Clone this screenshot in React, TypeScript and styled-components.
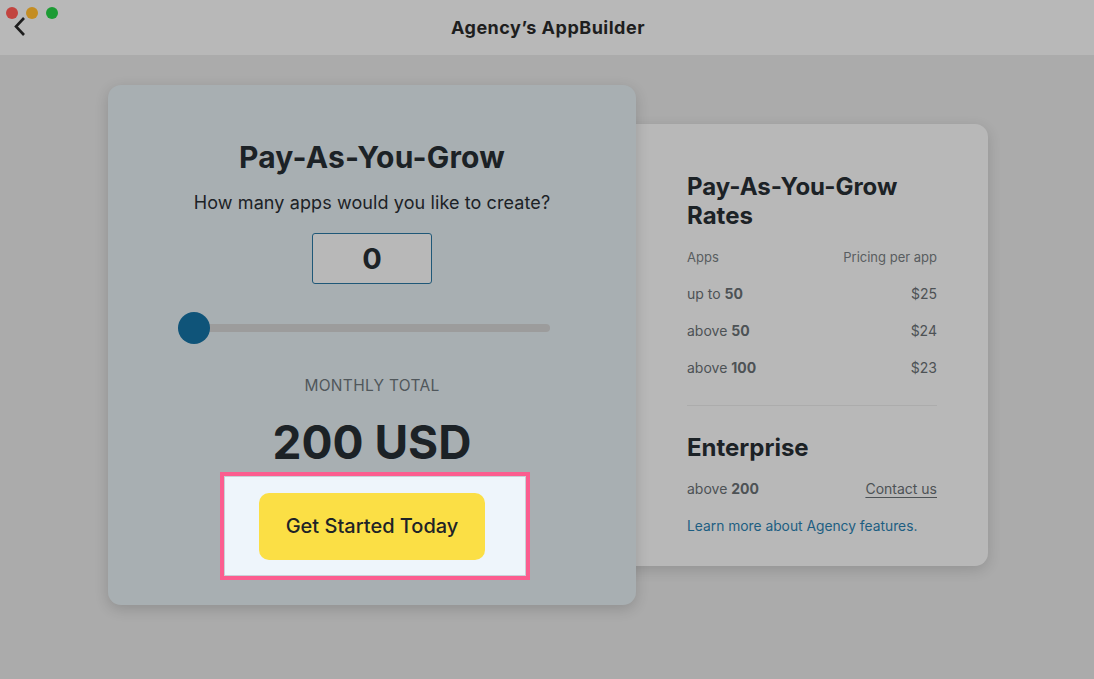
import React from "react";
import styled, { createGlobalStyle } from "styled-components";

const GlobalStyle = createGlobalStyle`
  html, body { margin: 0; padding: 0; }
  body {
    background: #ababab;
    font-family: Inter, "Noto Sans", "Liberation Sans", sans-serif;
    color: #1c2226;
  }
`;

const Window = styled.div`
  min-height: 679px;
  display: flex;
  flex-direction: column;
  background: #ababab;
`;

const TitleBar = styled.header`
  position: relative;
  height: 55px;
  flex: none;
  background: #b8b8b8;
  display: flex;
  align-items: center;
  justify-content: center;
`;

const AppTitle = styled.h1`
  margin: 0 0 0 2px;
  font-size: 18px;
  font-weight: 700;
  color: #1e1e1e;
  letter-spacing: 0.5px;
`;

const Lights = styled.div`
  position: absolute;
  top: 7px;
  left: 6px;
  display: flex;
  gap: 8px;
`;

const Light = styled.span<{ $c: string }>`
  width: 12px;
  height: 12px;
  border-radius: 50%;
  background: ${(p) => p.$c};
`;

const BackButton = styled.div`
  position: absolute;
  left: 12px;
  top: 16px;
  width: 16px;
  height: 22px;
  display: flex;
`;

const Stage = styled.main`
  display: flex;
  align-items: flex-start;
  padding: 30px 0 0 108px;
`;

const PrimaryCard = styled.section`
  position: relative;
  z-index: 2;
  box-sizing: border-box;
  width: 528px;
  height: 520px;
  padding-top: 55px;
  background: #a8afb2;
  border-radius: 13px;
  box-shadow: 0 4px 14px rgba(0, 0, 0, 0.16);
  display: flex;
  flex-direction: column;
  align-items: center;
`;

const PlanTitle = styled.h2`
  margin: 0;
  font-size: 30px;
  line-height: 34px;
  font-weight: 700;
  letter-spacing: 0.2px;
  color: #1c2226;
`;

const Question = styled.p`
  margin: 18px 0 0;
  font-size: 18px;
  line-height: 22px;
  font-weight: 400;
  letter-spacing: 0.1px;
  color: #1c2226;
`;

const CountBox = styled.div`
  box-sizing: border-box;
  margin-top: 19px;
  width: 120px;
  height: 51px;
  border: 1.5px solid #1f5878;
  border-radius: 3px;
  background: #b8b8b8;
  display: flex;
  align-items: center;
  justify-content: center;
  font-size: 29px;
  font-weight: 700;
  color: #1c2226;
`;

const Slider = styled.div`
  position: relative;
  align-self: flex-start;
  margin: 28px 0 0 70px;
  width: 372px;
  height: 32px;
  display: flex;
  align-items: center;
`;

const Track = styled.div`
  width: 100%;
  height: 8px;
  border-radius: 4px;
  background: #9c9c9c;
`;

const Thumb = styled.div`
  position: absolute;
  left: 0;
  top: 0;
  width: 32px;
  height: 32px;
  border-radius: 50%;
  background: #0f5479;
`;

const TotalLabel = styled.div`
  margin-top: 32px;
  font-size: 15.5px;
  line-height: 20px;
  letter-spacing: 0.3px;
  color: #50575b;
`;

const TotalValue = styled.div`
  margin-top: 20px;
  font-size: 46px;
  line-height: 52px;
  font-weight: 700;
  color: #1c2226;
`;

const Spotlight = styled.div`
  box-sizing: border-box;
  margin: 4px 0 0 6px;
  width: 310px;
  height: 108px;
  border: 4px solid #fb5d8f;
  box-shadow: inset 0 0 0 1px #c9d0d6;
  background: #eef5fb;
  display: flex;
  align-items: center;
  justify-content: center;
`;

const CtaButton = styled.button`
  width: 226px;
  height: 67px;
  margin-left: -6px;
  border: none;
  border-radius: 10px;
  background: #fbdf45;
  font-family: inherit;
  font-size: 20px;
  font-weight: 500;
  color: #1e2327;
  cursor: pointer;
`;

const RatesCard = styled.aside`
  box-sizing: border-box;
  margin: 39px 0 0 -30px;
  width: 382px;
  height: 442px;
  padding: 48px 51px 0 81px;
  background: #b8b8b8;
  border-radius: 13px;
  box-shadow: 0 4px 14px rgba(0, 0, 0, 0.14);
  display: flex;
  flex-direction: column;
`;

const RatesTitle = styled.h3<{ $top?: number }>`
  margin: ${(p) => p.$top ?? 0}px 0 0;
  font-size: 24px;
  line-height: 29px;
  font-weight: 700;
  color: #1c2226;
`;

const Row = styled.div<{ $top: number; $small?: boolean }>`
  margin-top: ${(p) => p.$top}px;
  display: flex;
  justify-content: space-between;
  font-size: ${(p) => (p.$small ? 13 : 14)}px;
  line-height: ${(p) => (p.$small ? 18 : 20)}px;
  color: ${(p) => (p.$small ? "#595d60" : "#4d5255")};
  b { font-weight: 700; }
`;

const Divider = styled.hr`
  margin: 27px 0 0;
  border: none;
  height: 1px;
  background: #acacac;
`;

const Contact = styled.a`
  color: #4d5255;
  text-decoration: underline;
  text-underline-offset: 3px;
`;

const LearnMore = styled.a`
  margin-top: 17px;
  font-size: 13.8px;
  line-height: 20px;
  color: #1d5e82;
  text-decoration: none;
`;

export default function App() {
  return (
    <>
      <GlobalStyle />
      <Window>
        <TitleBar>
          <Lights>
            <Light $c="#c2443f" />
            <Light $c="#c48d22" />
            <Light $c="#1c9b34" />
          </Lights>
          <BackButton>
            <svg width="16" height="22" viewBox="0 0 16 22" fill="none">
              <path d="M12 2 L4 10.5 L12 19" stroke="#1d1d1d" strokeWidth="2.6" strokeLinecap="butt" strokeLinejoin="miter" />
            </svg>
          </BackButton>
          <AppTitle>Agency’s AppBuilder</AppTitle>
        </TitleBar>
        <Stage>
          <PrimaryCard>
            <PlanTitle>Pay-As-You-Grow</PlanTitle>
            <Question>How many apps would you like to create?</Question>
            <CountBox>0</CountBox>
            <Slider>
              <Track />
              <Thumb />
            </Slider>
            <TotalLabel>MONTHLY TOTAL</TotalLabel>
            <TotalValue>200 USD</TotalValue>
            <Spotlight>
              <CtaButton>Get Started Today</CtaButton>
            </Spotlight>
          </PrimaryCard>
          <RatesCard>
            <RatesTitle>
              Pay-As-You-Grow
              <br />
              Rates
            </RatesTitle>
            <Row $top={18} $small>
              <span>Apps</span>
              <span>Pricing per app</span>
            </Row>
            <Row $top={18}>
              <span>
                up to <b>50</b>
              </span>
              <span>$25</span>
            </Row>
            <Row $top={17}>
              <span>
                above <b>50</b>
              </span>
              <span>$24</span>
            </Row>
            <Row $top={17}>
              <span>
                above <b>100</b>
              </span>
              <span>$23</span>
            </Row>
            <Divider />
            <RatesTitle $top={27}>Enterprise</RatesTitle>
            <Row $top={17}>
              <span>
                above <b>200</b>
              </span>
              <Contact>Contact us</Contact>
            </Row>
            <LearnMore>Learn more about Agency features.</LearnMore>
          </RatesCard>
        </Stage>
      </Window>
    </>
  );
}
